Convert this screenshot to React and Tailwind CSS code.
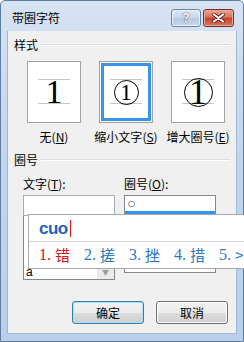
const cjk = "font-['Noto_Sans_CJK_SC','Liberation_Sans',sans-serif]";

function GroupLabel({ children }) {
  return (
    <div className="flex items-center gap-[3px] px-[6px] h-[16px]">
      <span className="text-[12px] leading-[16px]">{children}</span>
      <div className="flex-1 flex flex-col">
        <div className="h-px bg-[#d5dfe5]" />
        <div className="h-px bg-white" />
      </div>
    </div>
  );
}

function Preview({ selected, hot, label, children }) {
  return (
    <div className="flex flex-col items-center w-[54px]">
      <div className="relative w-[54px] h-[62px] border border-[#a3a3a3] bg-white p-px">
        <div className="absolute left-[10px] right-[10px] top-[17px] h-px bg-[#c6c6c6]" />
        <div className="absolute left-[10px] right-[10px] top-[41px] h-px bg-[#c6c6c6]" />
        <div
          className={
            selected
              ? "relative w-full h-full flex items-center justify-center border-[3px] border-[#3794ee]"
              : "relative w-full h-full flex items-center justify-center"
          }
        >
          {children}
        </div>
      </div>
      <span className="mt-[6px] text-[12px] leading-[16px] whitespace-nowrap">
        {label}(<span className="underline">{hot}</span>)
      </span>
    </div>
  );
}

function One({ size }) {
  return (
    <span className={`font-['Liberation_Serif',serif] leading-none ${size}`}>1</span>
  );
}

function Button({ primary, children }) {
  return (
    <button
      className={
        primary
          ? "w-[72px] h-[23px] rounded-[3px] border border-[#3c7fb1] shadow-[inset_0_0_0_1px_#a9dcf6] bg-[linear-gradient(#f2f2f2_0%,#ebebeb_50%,#dddddd_50%,#cfcfcf_100%)] text-[12px] leading-[16px]"
          : "w-[72px] h-[23px] rounded-[3px] border border-[#707070] shadow-[inset_0_0_0_1px_#fcfcfc] bg-[linear-gradient(#f2f2f2_0%,#ebebeb_50%,#dddddd_50%,#cfcfcf_100%)] text-[12px] leading-[16px]"
      }
    >
      {children}
    </button>
  );
}

const candidates = [
  { n: "1.", c: "错", red: true },
  { n: "2.", c: "搓" },
  { n: "3.", c: "挫" },
  { n: "4.", c: "措" },
  { n: "5.", c: ">" },
];

export default function App() {
  return (
    <div className={`relative w-[244px] h-[342px] overflow-hidden text-black ${cjk}`}>
      {/* window frame */}
      <div className="w-full h-full flex flex-col border border-[#5e7d9e] rounded-t-[5px] bg-[linear-gradient(#d6e3f3,#c3d6ee_40%,#b9cfea)]">
        {/* title bar */}
        <div className="h-[30px] flex items-start pl-[11px] pr-[9px]">
          <span className="mt-[9px] text-[12px] leading-[16px]">带圈字符</span>
          <div className="ml-auto mt-[8px] flex gap-[2px]">
            <div className="w-[30px] h-[18px] rounded-[3px] border border-[#6d84a3] shadow-[inset_0_0_0_1px_#e9f0f9] bg-[linear-gradient(#dde7f3,#c8d7ea_48%,#b5c8e0_50%,#c6d7ec)] flex items-center justify-center">
              <span className="font-['Liberation_Sans',sans-serif] font-bold text-[12px] leading-none text-white [text-shadow:0_0_1px_#2e4765,0_0_1px_#2e4765]">?</span>
            </div>
            <div className="w-[31px] h-[18px] rounded-[3px] border border-[#7d2c22] shadow-[inset_0_0_0_1px_#eaa99b] bg-[linear-gradient(#e9a696,#d7735f_45%,#c4402c_52%,#d27a64)] flex items-center justify-center">
              <svg width="13" height="10" viewBox="0 0 13 10">
                <path d="M2 1.5 L11 8.5 M11 1.5 L2 8.5" stroke="#5a1a12" strokeWidth="3.6" strokeLinecap="round" />
                <path d="M2 1.5 L11 8.5 M11 1.5 L2 8.5" stroke="#ffffff" strokeWidth="2.2" strokeLinecap="round" />
              </svg>
            </div>
          </div>
        </div>

        {/* client area */}
        <div className="mx-[6px] mb-[7px] flex-1 flex flex-col bg-[#f0f0f0] border-x border-b border-[#a2b7d2]">
          <div className="mt-[6px]">
            <GroupLabel>样式</GroupLabel>
          </div>

          <div className="mt-[8px] pl-[19px] flex gap-[18px]">
            <Preview label="无" hot="N">
              <One size="text-[34px]" />
            </Preview>
            <Preview selected label="缩小文字" hot="S">
              <div className="w-[25px] h-[25px] rounded-full border border-black flex items-center justify-center">
                <One size="text-[23px]" />
              </div>
            </Preview>
            <Preview label="增大圈号" hot="E">
              <div className="w-[29px] h-[29px] rounded-full border border-black flex items-center justify-center">
                <One size="text-[36px]" />
              </div>
            </Preview>
          </div>

          <div className="mt-[7px]">
            <GroupLabel>圈号</GroupLabel>
          </div>

          <div className="mt-[8px] pl-[15px] grid grid-cols-[92px_92px] gap-x-[9px]">
            <span className="text-[12px] leading-[16px]">
              文字(<span className="underline">T</span>):
            </span>
            <span className="text-[12px] leading-[16px]">
              圈号(<span className="underline">O</span>):
            </span>

            {/* 文字 combo */}
            <div className="mt-[3px] flex flex-col">
              <div className="h-[21px] border border-[#abadb3] bg-white" />
              <div className="h-[64px] border border-[#828790] border-t-0 bg-white flex items-end">
                <span className="flex-1 pl-[2px] font-['Liberation_Sans',sans-serif] text-[12px] leading-[14px]">a</span>
                <div className="w-[17px] h-[14px] bg-[#eaeaea] flex items-center justify-center">
                  <span className="text-[7px] leading-none text-[#9a9a9a]">▼</span>
                </div>
              </div>
            </div>

            {/* 圈号 list */}
            <div className="mt-[3px] h-[78px] border border-[#828790] bg-white flex flex-col">
              <div className="h-[15px] pl-[3px] flex items-center">
                <span className="font-['DejaVu_Sans',sans-serif] text-[8px] leading-none">○</span>
              </div>
              <div className="h-[16px] bg-[#3794ee]" />
            </div>
          </div>

          <div className="mt-auto pb-[9px] pr-[8px] flex justify-end gap-[12px]">
            <Button primary>确定</Button>
            <Button>取消</Button>
          </div>
        </div>
      </div>

      {/* IME candidate window */}
      <div className="absolute left-[28px] top-[214px] w-[230px] h-[55px] bg-white border border-[#a9a9a9] flex flex-col">
        <div className="h-[26px] pl-[10px] flex items-center">
          <span className="font-['Liberation_Sans',sans-serif] font-bold text-[17px] leading-none tracking-[-0.5px] text-[#1f62b5]">cuo</span>
          <span className="ml-[2px] w-px h-[17px] bg-[#e0101a]" />
        </div>
        <div className="h-px bg-[#d6d6d6]" />
        <div className="flex-1 pl-[10px] flex items-center">
          {candidates.map((k) => (
            <span
              key={k.n}
              className={`w-[45px] shrink-0 flex items-center whitespace-nowrap ${k.red ? "text-[#d4141c]" : "text-[#2a78c2]"}`}
            >
              <span className="w-[16px] font-['Liberation_Serif',serif] text-[16px] leading-[20px]">{k.n}</span>
              <span className="text-[15px] leading-[20px]">{k.c}</span>
            </span>
          ))}
        </div>
      </div>
    </div>
  );
}
